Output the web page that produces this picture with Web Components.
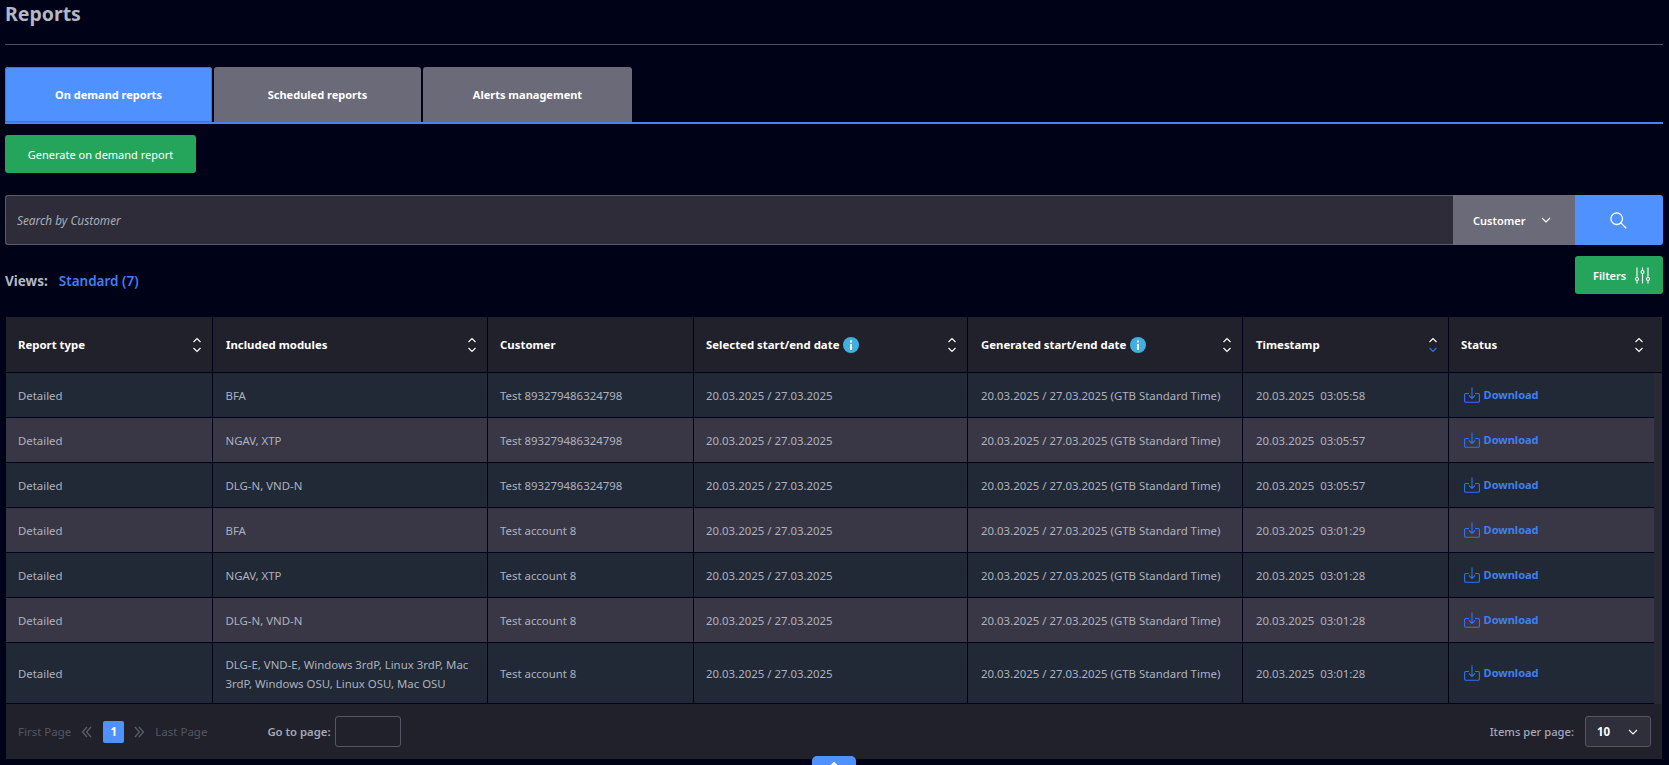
<!DOCTYPE html>
<html lang="en">
<head>
<meta charset="utf-8">
<title>Reports</title>
<style>
  html, body { margin: 0; height: 100%; background: #000218; overflow: hidden; }
  body { font-family: "Noto Sans", sans-serif; color: #b4b8c4; }
  main { padding: 0 6px 0 5px; position: relative; height: 765px; box-sizing: border-box; }
</style>
</head>
<body>
<main>
  <page-title>Reports</page-title>
  <tab-bar>
    <tab-item active>On demand reports</tab-item>
    <tab-item>Scheduled reports</tab-item>
    <tab-item wide>Alerts management</tab-item>
  </tab-bar>
  <action-button>Generate on demand report</action-button>
  <search-bar placeholder="Search by Customer" field="Customer"></search-bar>
  <views-bar label="Standard (7)"></views-bar>
  <report-table></report-table>
  <collapse-handle></collapse-handle>
</main>

<script>
const icons = {
  sort: (up = '#fff', down = '#fff') => `<svg width="10" height="16" viewBox="0 0 10 16" fill="none" stroke-width="1.1"><path d="M1.5 5 5 1.6 8.5 5" stroke="${up}"/><path d="M1.5 11 5 14.4 8.5 11" stroke="${down}"/></svg>`,
  chevron: `<svg width="10" height="6" viewBox="0 0 10 6" fill="none" stroke="#fff" stroke-width="1.1"><path d="M1 1 5 5 9 1"/></svg>`,
  search: `<svg width="17" height="17" viewBox="0 0 17 17" fill="none" stroke="#fff" stroke-width="1.3"><circle cx="6.7" cy="6.7" r="5.8"/><path d="M10.9 10.9 16.2 16.2"/></svg>`,
  filters: `<svg width="15" height="17" viewBox="0 0 15 17" fill="none" stroke="#fff" stroke-width="1.1"><path d="M2 .5v10M2 13.5v3M7.5 .5v3M7.5 6.5v10M13 .5v10M13 13.5v3"/><circle cx="2" cy="12" r="1.5"/><circle cx="7.5" cy="5" r="1.5"/><circle cx="13" cy="12" r="1.5"/></svg>`,
  download: `<svg width="16" height="16" viewBox="0 0 16 16" fill="none" stroke="#2f74ee" stroke-width="1.1"><path d="M5 6.5H1.9C1.2 6.5.6 7 .6 7.7v6.2c0 .7.6 1.3 1.3 1.3h12.2c.7 0 1.3-.6 1.3-1.3V7.7c0-.7-.6-1.2-1.3-1.2H11"/><path d="M8 .4v11M4.9 8.4 8 11.5l3.1-3.1"/></svg>`,
  info: `<svg width="16" height="16" viewBox="0 0 16 16"><circle cx="8" cy="8" r="8" fill="#3fb0e0"/><path d="M7 7h2v6H7zM7 3.4h2v2H7z" fill="#fff"/></svg>`,
  dbl: (d) => `<svg width="11" height="12" viewBox="0 0 11 12" fill="none" stroke="#5b5e6c" stroke-width="1.3"><path d="${d}"/></svg>`
};

class PageTitle extends HTMLElement {
  constructor() {
    super();
    this.attachShadow({ mode: 'open' }).innerHTML = `
      <style>
        :host { display: block; height: 44px; border-bottom: 1px solid #4f4f5c; margin-bottom: 22px; box-sizing: content-box; }
        h1 { margin: 0; font: 700 19.5px/28px "Noto Sans", sans-serif; color: #b4b8c4; }
      </style>
      <h1><slot></slot></h1>`;
  }
}

class TabBar extends HTMLElement {
  constructor() {
    super();
    this.attachShadow({ mode: 'open' }).innerHTML = `
      <style>
        :host { display: flex; gap: 2px; height: 55px; border-bottom: 2px solid #4a82f0; margin-bottom: 11px; }
      </style>
      <slot></slot>`;
  }
}

class TabItem extends HTMLElement {
  constructor() {
    super();
    this.attachShadow({ mode: 'open' }).innerHTML = `
      <style>
        :host { display: flex; align-items: center; justify-content: center; width: 207px; height: 55px;
          background: #6b6a78; border-radius: 3px 3px 0 0; color: #fff; font: 700 11px "Noto Sans", sans-serif; }
        :host([active]) { background: #4f92ff; box-shadow: inset 0 0 0 1px #5a6f9a; }
        :host([wide]) { width: 209px; }
      </style>
      <slot></slot>`;
  }
}

class ActionButton extends HTMLElement {
  constructor() {
    super();
    this.attachShadow({ mode: 'open' }).innerHTML = `
      <style>
        :host { display: flex; align-items: center; justify-content: center; width: 191px; height: 38px;
          background: #25a55c; border-radius: 3px; color: #fff; font: 400 11px "Noto Sans", sans-serif; margin-bottom: 22px; }
      </style>
      <slot></slot>`;
  }
}

class SearchBar extends HTMLElement {
  constructor() {
    super();
    this.attachShadow({ mode: 'open' }).innerHTML = `
      <style>
        :host { display: flex; height: 50px; margin-bottom: 11px; font: 400 11px "Noto Sans", sans-serif; }
        .input { flex: 1; background: #2d2c38; border: 1px solid #5a5a68; border-right: 0; border-radius: 3px 0 0 3px;
          display: flex; align-items: center; padding-left: 11px; font-size: 11.8px; font-style: italic; color: #a9acb8; }
        .field { width: 122px; box-sizing: border-box; background: #6b6a78; color: #fff; font-weight: 600;
          display: flex; align-items: center; padding-left: 20px; gap: 16px; }
        .go { width: 88px; box-sizing: border-box; padding-right: 2px; background: #4f92ff; border-radius: 0 3px 3px 0; display: flex; align-items: center; justify-content: center; }
      </style>
      <div class="input">${this.getAttribute('placeholder')}</div>
      <div class="field">${this.getAttribute('field')} ${icons.chevron}</div>
      <div class="go">${icons.search}</div>`;
  }
}

class ViewsBar extends HTMLElement {
  constructor() {
    super();
    this.attachShadow({ mode: 'open' }).innerHTML = `
      <style>
        :host { display: flex; justify-content: space-between; height: 38px; margin-bottom: 23px; }
        .views { display: flex; gap: 11px; align-items: center; padding-top: 11px; font: 700 13.5px "Noto Sans", sans-serif; color: #b4b8c4; }
        .views span { color: #3e80f2; font-weight: 600; }
        .filters { width: 88px; box-sizing: border-box; padding-left: 18px; background: #25a55c; border-radius: 3px; color: #fff;
          display: flex; align-items: center; gap: 9px; font: 600 11px "Noto Sans", sans-serif; }
      </style>
      <div class="views">Views: <span>${this.getAttribute('label')}</span></div>
      <div class="filters">Filters ${icons.filters}</div>`;
  }
}

const COLS = '207px 275px 206px 274px 275px 206px 1fr';

class ReportRow extends HTMLElement {
  constructor() {
    super();
    this.attachShadow({ mode: 'open' });
  }
  connectedCallback() {
    const cells = JSON.parse(this.getAttribute('cells'));
    const rowH = this.hasAttribute('tall') ? 61 : 45;
    this.shadowRoot.innerHTML = `
      <style>
        :host { display: grid; grid-template-columns: ${COLS}; height: ${rowH}px; box-sizing: border-box;
          border-bottom: 1px solid #000218; background: #212936; margin-right: 8px; font: 400 11.4px/19px "Noto Sans", sans-serif; color: #aeb2be; }
        :host([even]) { background: #393745; }
        .cell { display: flex; align-items: center; padding: 1px 12px 0; border-right: 1px solid #000218; box-sizing: border-box; white-space: pre-wrap; }
        .cell:nth-of-type(2) { padding-left: 12.5px; }
        .cell:nth-of-type(5), .cell:nth-of-type(6) { padding-left: 13px; }
        .cell:last-of-type { border-right: 0; padding: 0 0 0 15px; }
        a { display: flex; align-items: center; gap: 3.6px; color: #3e80f2; font-weight: 700; font-size: 11px; }
        a span { position: relative; top: -1px; }
      </style>
      ${cells.map(c => `<div class="cell">${c}</div>`).join('')}
      <div class="cell"><a>${icons.download}<span>Download</span></a></div>`;
  }
}

class ReportTable extends HTMLElement {
  constructor() {
    super();
    this.attachShadow({ mode: 'open' });
  }
  connectedCallback() {
    const heads = [
      ['Report type', icons.sort()],
      ['Included modules', icons.sort()],
      ['Customer', ''],
      [`Selected start/end date <i>${icons.info}</i>`, icons.sort()],
      [`Generated start/end date <i>${icons.info}</i>`, icons.sort()],
      ['Timestamp', icons.sort('#fff', '#2f74ee')],
      ['Status', icons.sort()]
    ];
    const range = '20.03.2025 / 27.03.2025';
    const rows = [
      ['BFA', 'Test 893279486324798', '03:05:58'],
      ['NGAV, XTP', 'Test 893279486324798', '03:05:57'],
      ['DLG-N, VND-N', 'Test 893279486324798', '03:05:57'],
      ['BFA', 'Test account 8', '03:01:29'],
      ['NGAV, XTP', 'Test account 8', '03:01:28'],
      ['DLG-N, VND-N', 'Test account 8', '03:01:28'],
      ['DLG-E, VND-E, Windows 3rdP, Linux 3rdP, Mac 3rdP, Windows OSU, Linux OSU, Mac OSU', 'Test account 8', '03:01:28']
    ];
    this.shadowRoot.innerHTML = `
      <style>
        :host { display: block; margin: 0 1px 0 1px; background: #2a2a36; }
        .head { display: grid; grid-template-columns: ${COLS}; height: 56px; box-sizing: border-box; background: #21212b;
          border-bottom: 1px solid #000218; font: 700 11.4px "Noto Sans", sans-serif; color: #fff; }
        .head div { display: flex; align-items: center; justify-content: space-between; padding: 0 10px 0 12px; border-right: 1px solid #000218; box-sizing: border-box; }
        .head div:nth-child(2), .head div:nth-child(5), .head div:nth-child(6) { padding-left: 13px; }
        .head div:last-child { border-right: 0; padding-right: 18px; }
        .head span { display: flex; align-items: center; gap: 4px; }
        i { display: flex; }
      </style>
      <div class="head">${heads.map(([t, s]) => `<div><span>${t}</span>${s}</div>`).join('')}</div>
      <div id="rows"></div>
      <table-pager></table-pager>`;
    const host = this.shadowRoot.getElementById('rows');
    rows.forEach((r, i) => {
      const row = document.createElement('report-row');
      row.setAttribute('cells', JSON.stringify(['Detailed', r[0], r[1], range, range + ' (GTB Standard Time)', '20.03.2025  ' + r[2]]));
      if (i % 2) row.setAttribute('even', '');
      if (i === 6) row.setAttribute('tall', '');
      host.appendChild(row);
    });
  }
}

class TablePager extends HTMLElement {
  constructor() {
    super();
    this.attachShadow({ mode: 'open' }).innerHTML = `
      <style>
        :host { display: flex; align-items: center; height: 55px; background: #21212b; padding: 0 11px 0 12px;
          font: 400 11.5px "Noto Sans", sans-serif; color: #535664; }
        .nav { display: flex; align-items: center; margin-left: 10px; margin-right: 11px; }
        .page { width: 21px; height: 22px; background: #4f92ff; border-radius: 2px; color: #fff; font-weight: 700;
          display: flex; align-items: center; justify-content: center; margin-right: 10px; }
        .go { margin-left: 60px; color: #a4a9b8; font-weight: 600; font-size: 11.3px; }
        .box { width: 66px; height: 31px; box-sizing: border-box; border: 1px solid #555664; border-radius: 3px; margin-left: 4px; }
        .items { margin-left: auto; color: #a4a9b8; font-weight: 500; font-size: 11.2px; }
        .select { width: 66px; height: 31px; box-sizing: border-box; border: 1px solid #555664; border-radius: 3px; margin-left: 11px;
          background: #2f2f3b; color: #fff; font-weight: 700; display: flex; align-items: center; justify-content: space-between; padding: 0 12px 0 11px; }
      </style>
      <span>First Page</span>
      <div class="nav">${icons.dbl('M6 1 1.5 6 6 11M10 1 5.5 6 10 11')}</div>
      <div class="page">1</div>
      <div class="nav" style="margin:0 10px 0 0">${icons.dbl('M1 1 5.5 6 1 11M5 1 9.5 6 5 11')}</div>
      <span>Last Page</span>
      <span class="go">Go to page:</span>
      <div class="box"></div>
      <span class="items">Items per page:</span>
      <div class="select">10 ${icons.chevron}</div>`;
  }
}

class CollapseHandle extends HTMLElement {
  constructor() {
    super();
    this.attachShadow({ mode: 'open' }).innerHTML = `
      <style>
        :host { position: absolute; left: 812px; top: 756px; width: 44px; height: 9px; background: #4f92ff;
          border-radius: 5px 5px 0 0; display: flex; justify-content: center; padding-top: 6px; box-sizing: border-box; }
      </style>
      <svg width="10" height="6" viewBox="0 0 10 6" fill="none" stroke="#fff" stroke-width="2"><path d="M1 5 5 1 9 5"/></svg>`;
  }
}

customElements.define('page-title', PageTitle);
customElements.define('tab-bar', TabBar);
customElements.define('tab-item', TabItem);
customElements.define('action-button', ActionButton);
customElements.define('search-bar', SearchBar);
customElements.define('views-bar', ViewsBar);
customElements.define('report-row', ReportRow);
customElements.define('report-table', ReportTable);
customElements.define('table-pager', TablePager);
customElements.define('collapse-handle', CollapseHandle);
</script>
</body>
</html>
